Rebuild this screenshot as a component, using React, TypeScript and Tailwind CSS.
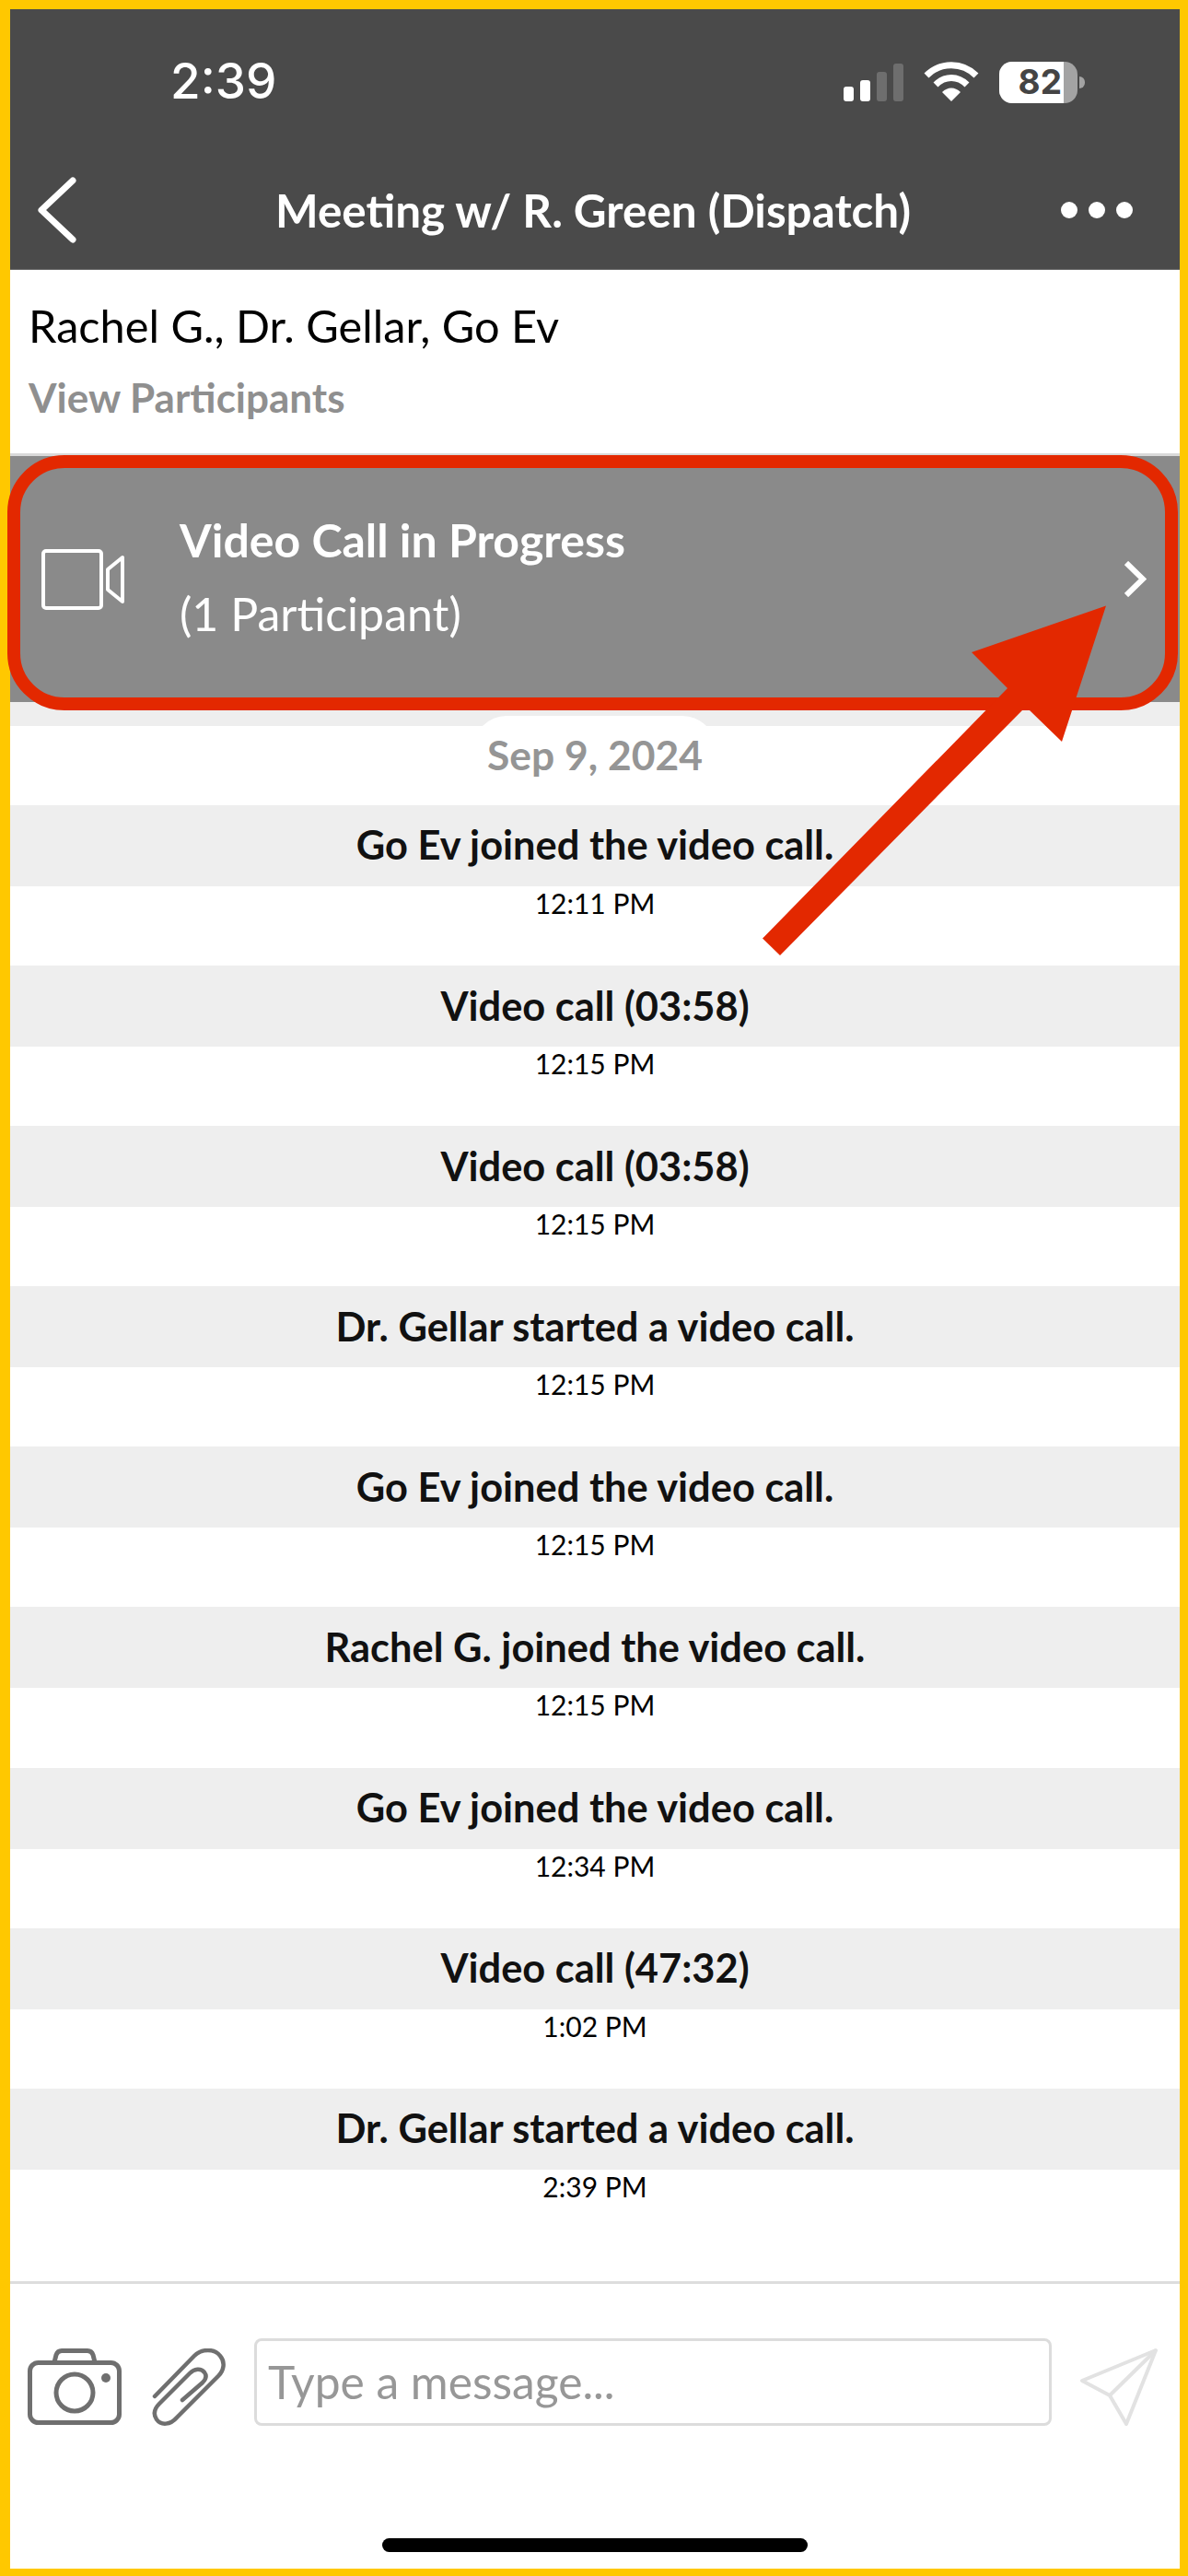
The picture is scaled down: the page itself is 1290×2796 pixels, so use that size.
import React from 'react';

const events = [
  { text: 'Go Ev joined the video call.', time: '12:11 PM' },
  { text: 'Video call (03:58)', time: '12:15 PM' },
  { text: 'Video call (03:58)', time: '12:15 PM' },
  { text: 'Dr. Gellar started a video call.', time: '12:15 PM' },
  { text: 'Go Ev joined the video call.', time: '12:15 PM' },
  { text: 'Rachel G. joined the video call.', time: '12:15 PM' },
  { text: 'Go Ev joined the video call.', time: '12:34 PM' },
  { text: 'Video call (47:32)', time: '1:02 PM' },
  { text: 'Dr. Gellar started a video call.', time: '2:39 PM' },
];

function StatusIcons() {
  return (
    <div className="flex items-center">
      <div className="flex items-end gap-[7px] h-[41px]">
        <div className="w-[11px] h-[16px] rounded-[3px] bg-white" />
        <div className="w-[11px] h-[23px] rounded-[3px] bg-white" />
        <div className="w-[11px] h-[32px] rounded-[3px] bg-[#6e6e6e]" />
        <div className="w-[11px] h-[41px] rounded-[3px] bg-[#6e6e6e]" />
      </div>
      <svg className="ml-[22px]" width="60" height="44" viewBox="0 0 60 44" fill="none">
        <path d="M3 15 C18 0 42 0 57 15" stroke="#fff" strokeWidth="7" />
        <path d="M13 25 C23 15 37 15 47 25" stroke="#fff" strokeWidth="7" />
        <path d="M20 33 C26 27 34 27 40 33 L30 43 Z" fill="#fff" />
      </svg>
      <div className="relative ml-[22px] flex h-[45px] w-[85px] overflow-hidden rounded-[14px] bg-[#a3a3a3]">
        <div className="flex w-[70px] items-center justify-end bg-white pr-[2px] font-['Inter',sans-serif] text-[37px] font-bold text-[#444444]">
          82
        </div>
      </div>
      <div className="ml-[2px] h-[13px] w-[6px] rounded-r-full bg-[#a3a3a3]" />
    </div>
  );
}

function VideoIcon() {
  return (
    <svg width="90" height="66" viewBox="0 0 90 66" fill="none" stroke="#fff" strokeWidth="4" strokeLinejoin="round">
      <rect x="2" y="2" width="63" height="62" rx="3" />
      <path d="M72 22 L88 9 V57 L72 44 Z" />
    </svg>
  );
}

function CameraIcon() {
  return (
    <svg width="102" height="84" viewBox="0 0 102 84" fill="none" stroke="#6f6f6f" strokeWidth="5">
      <rect x="2.5" y="15.5" width="97" height="65" rx="9" />
      <path d="M29 15 L31 7 C32 4 34 2.5 37 2.5 H65 C68 2.5 70 4 71 7 L73 15" />
      <circle cx="51" cy="48" r="20" />
      <circle cx="85" cy="32" r="5" fill="#6f6f6f" stroke="none" />
    </svg>
  );
}

function ClipIcon() {
  return (
    <svg width="80" height="84" viewBox="0 0 80 84" fill="none" stroke="#6f6f6f" strokeWidth="4.5" strokeLinecap="round">
      <path d="M3 52 L46 8 C54 0 68 0 74 8 C80 15 78 24 72 30 L27 75 C20 83 10 84 5 77 C1 71 3 65 8 60 L41 27 C46 22 53 21 57 26 C60 30 58 34 55 37 L33 56" />
    </svg>
  );
}

function SendIcon() {
  return (
    <svg width="86" height="84" viewBox="0 0 86 84" fill="none" stroke="#e2e2e2" strokeWidth="4" strokeLinejoin="round">
      <path d="M83 2 L3 35 L33 51 L51 82 Z" />
      <path d="M83 2 L33 51" />
    </svg>
  );
}

export default function App() {
  return (
    <div className="relative h-[2796px] w-[1290px] bg-[#ffc800] pt-[10px] pr-[9px] pb-[8px] pl-[11px] font-['Lato',sans-serif]">
      <div className="flex h-full flex-col overflow-hidden bg-white">
        <header className="h-[283px] shrink-0 border-b border-[#6b6b6b] bg-[#4a4a4a] text-white">
          <div className="flex h-[160px] items-center justify-between pr-[103px] pl-[174px] pb-[2px]">
            <span className="font-['Inter',sans-serif] text-[53px] font-medium">2:39</span>
            <StatusIcons />
          </div>
          <div className="flex h-[116px] items-center justify-between pl-[29px] pr-[51px]">
            <div className="w-[96px]">
              <svg width="44" height="72" viewBox="0 0 44 72" fill="none" stroke="#fff" strokeWidth="7" strokeLinecap="round" strokeLinejoin="round">
                <path d="M39 4 L5 36 L39 68" />
              </svg>
            </div>
            <span className="text-[49.4px] font-bold">Meeting w/ R. Green (Dispatch)</span>
            <div className="flex w-[78px] gap-[12px]">
              <div className="h-[18px] w-[18px] rounded-full bg-white" />
              <div className="h-[18px] w-[18px] rounded-full bg-white" />
              <div className="h-[18px] w-[18px] rounded-full bg-white" />
            </div>
          </div>
        </header>

        <div className="h-[199px] shrink-0 px-[20px] pt-[30px]">
          <div className="text-[48.7px] leading-[60px] text-black">Rachel G., Dr. Gellar, Go Ev</div>
          <div className="mt-[23px] text-[44px] leading-[50px] font-bold text-[#8f8f8f]">View Participants</div>
        </div>

        <div className="flex h-[270px] shrink-0 items-center border-t-[3px] border-[#d9d9d9] bg-[#8a8a8a] pr-[36px] pl-[34px] text-white">
          <VideoIcon />
          <div className="-mt-[6px] ml-[60px] flex-1">
            <div className="text-[50px] leading-[60px] font-bold">Video Call in Progress</div>
            <div className="mt-[20px] text-[50px] leading-[60px]">(1 Participant)</div>
          </div>
          <svg width="24" height="39" viewBox="0 0 24 39" fill="none" stroke="#fff" strokeWidth="6">
            <path d="M2 2 L20 19.5 L2 37" />
          </svg>
        </div>

        <div className="relative h-[26px] shrink-0 bg-[#eeeeee]">
          <div className="absolute top-[15px] left-[503px] h-[40px] w-[263px] rounded-t-[36px] bg-white" />
        </div>
        <div className="relative shrink-0 pt-[5px] text-center text-[44.4px] leading-[52px] font-bold text-[#959595]">
          Sep 9, 2024
        </div>

        <div className="mt-[29px] flex flex-col">
          {events.map((e, i) => (
            <div key={i} className="h-[174.1px] shrink-0 text-center">
              <div className="flex h-[88px] items-center justify-center bg-[#eeeeee] pb-[2px] text-[43.4px] font-bold text-[#111111]">
                {e.text}
              </div>
              <div className="text-[30px] leading-[37px] text-black">{e.time}</div>
            </div>
          ))}
        </div>

        <div className="mt-auto shrink-0">
          <div className="flex h-[312px] flex-col border-t-[3px] border-[#dddddd]">
            <div className="flex items-end pt-[59px] pl-[19px] pr-[23px]">
              <CameraIcon />
              <div className="ml-[33px]"><ClipIcon /></div>
              <div className="ml-[31px] flex h-[95px] flex-1 items-center rounded-[8px] border-[3px] border-[#dcdcdc] pl-[12px] text-[49.7px] text-[#979797]">
                Type a message...
              </div>
              <div className="ml-[30px]"><SendIcon /></div>
            </div>
            <div className="mx-auto mt-[122px] h-[15px] w-[462px] rounded-full bg-black" />
          </div>
        </div>
      </div>

      {/* annotation drawn over the screenshot */}
      <div className="pointer-events-none absolute top-[494px] left-[8px] h-[277px] w-[1271px] rounded-[62px] border-[14px] border-[#e32800]" />
      <svg className="pointer-events-none absolute top-0 left-0" width="1290" height="2796" viewBox="0 0 1290 2796">
        <polygon points="1201,657.5 1055,708 1094,747 828,1018.6 847,1037 1110,771 1118,771 1153,805" fill="#e32800" />
      </svg>
    </div>
  );
}
